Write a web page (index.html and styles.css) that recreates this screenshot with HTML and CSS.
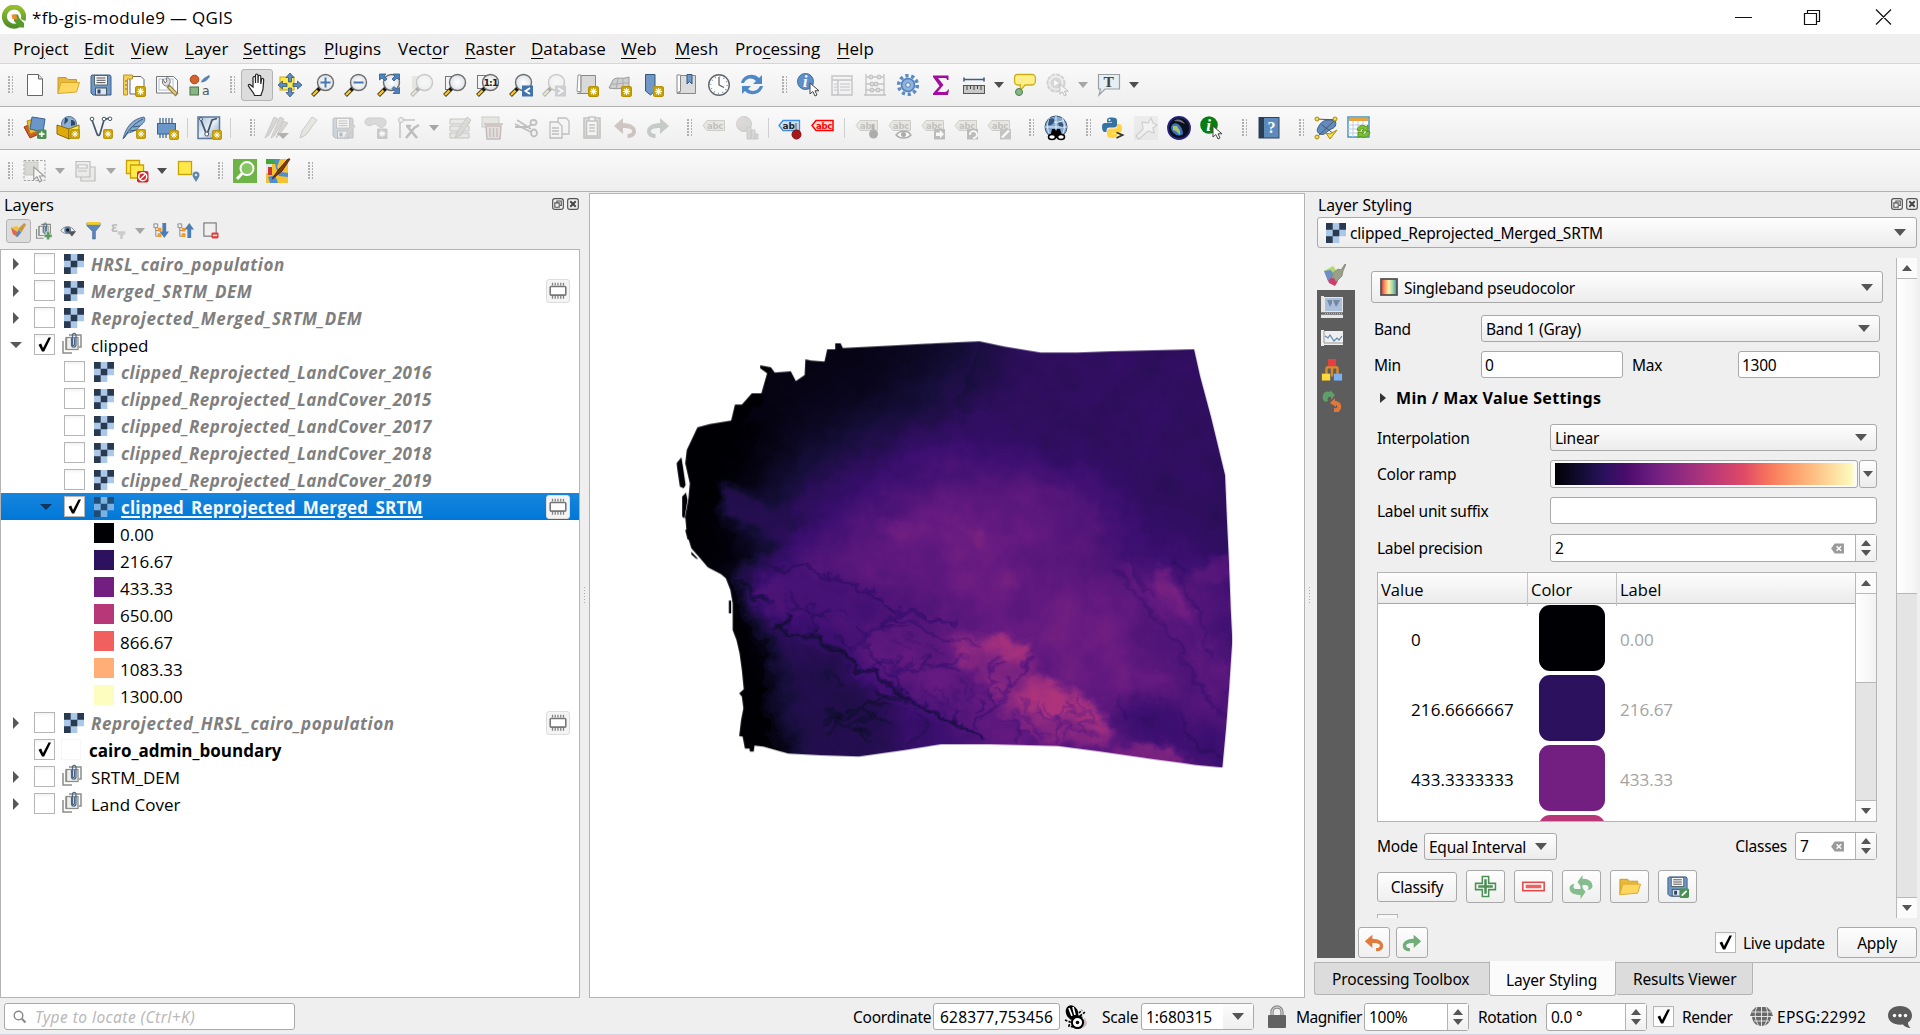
FILE: index.html
```html
<!DOCTYPE html>
<html lang="en">
<head>
<meta charset="utf-8">
<title>*fb-gis-module9 — QGIS</title>
<link rel="stylesheet" href="styles.css">
</head>
<body>
<svg class="defs" width="0" height="0">
  <defs>
    <linearGradient id="bluebox" x1="0" y1="0" x2="1" y2="1"><stop offset="0" stop-color="#a9c0da"/><stop offset=".5" stop-color="#e8eef5"/><stop offset="1" stop-color="#7c9cc4"/></linearGradient>
    <linearGradient id="spectral"><stop offset="0" stop-color="#d7303a"/><stop offset=".25" stop-color="#f8a064"/><stop offset=".5" stop-color="#fbf5b0"/><stop offset=".75" stop-color="#9bd3a4"/><stop offset="1" stop-color="#3480b8"/></linearGradient>
    <linearGradient id="qg" x1="0" y1="0" x2="0" y2="1"><stop offset="0" stop-color="#93bf2e"/><stop offset="1" stop-color="#4f8f28"/></linearGradient>
    <radialGradient id="glass"><stop offset="0" stop-color="#fff"/><stop offset="1" stop-color="#dfe3e6"/></radialGradient>
  </defs>
  <symbol id="star" viewBox="0 0 11 11"><rect x=".5" y=".5" width="10" height="10" rx="1.5" fill="#cda300" stroke="#b89100"/><path d="M5.5 2v7M2 5.500h7M3 3l5 5M8 3l-5 5" stroke="#fff" stroke-width="1.1"/><circle cx="5.500" cy="5.500" r="1.400" fill="#fff"/></symbol>
  <symbol id="lens" viewBox="0 0 24 24"><path d="M9 15 1.500 22.500" stroke="#3c3620" stroke-width="4"/><path d="M6.500 17.500 2 22" stroke="#f6c62c" stroke-width="2.400"/><circle cx="8" cy="16" r="1.700" fill="#111"/><circle cx="14.500" cy="9.500" r="8" fill="url(#glass)" stroke="#6d6d6d" stroke-width="1.400"/></symbol>
  <symbol id="folder" viewBox="0 0 24 24"><path d="M2 20V4.500h8l2 2h8.500V10" fill="#e9b93f" stroke="#c99b25"/><path d="M1.800 20.500 5 9.500h18.500L20.500 19z" fill="#ffd75e" stroke="#d9a72c"/></symbol>
  <symbol id="floppy" viewBox="0 0 24 24"><path d="M3 2h18l1 1.500V22H4l-2-2V3z" fill="#6f98c6" stroke="#3f5f86"/><rect x="5.500" y="2.500" width="13" height="9.500" fill="#f6f6f6" stroke="#566"/><path d="M7.500 5h9M7.500 7.300h9M7.500 9.600h9" stroke="#555"/><rect x="6.500" y="15" width="11" height="7" fill="#dde6ee" stroke="#456"/><rect x="8.500" y="16.500" width="3" height="4" fill="#2f4766"/></symbol>
  <symbol id="tag" viewBox="0 0 24 24"><path d="M1 9.500 5 4.500h17.500v10H5z" fill="#ddd8c4" stroke="#aaa692"/></symbol>
  <symbol id="raster" viewBox="0 0 20 20"><path fill="#acc8e8" d="M0 0h20v13.300h-6.700V20H0z"/><path fill="#29394f" d="M0 0h6.700v6.700H0zM13.300 0H20v6.700h-6.700zM6.700 6.700h6.600v6.600H6.700zM0 13.300h6.700V20H0z"/></symbol>
  <symbol id="group" viewBox="0 0 20 22"><path d="M1 9v12h9M4 18V6h8" fill="none" stroke="#8b8f87" stroke-width="1.500"/><rect x="4.500" y="5.500" width="11.500" height="12" fill="#eee" stroke="#8b8f87" stroke-width="1.300"/><path d="M7 3h12v12h-2.500" fill="none" stroke="#8b8f87" stroke-width="1.500"/><path d="M9.500 6v6.500c0 3.500 4.500 3.500 4.500 0V3.500c0-3-3.500-3-3.500 0v9c0 1.300 2 1.300 2 0V6" fill="none" stroke="#4a6684" stroke-width="1.200"/></symbol>
  <symbol id="chipmem" viewBox="0 0 24 24"><rect x="3.500" y="7" width="17" height="9.500" rx="1" fill="#fff" stroke="#767676" stroke-width="1.700"/><path d="M6 6V3M9 6V3M12 6V3M15 6V3M18 6V3M6 17.500v3M9 17.500v3M12 17.500v3M15 17.500v3M18 17.500v3" stroke="#808080" stroke-width="1.400"/></symbol>
  <symbol id="check" viewBox="0 0 21 21"><path d="M4.500 10.700 7.200 9.600 9 14 14.500 3.500h2.500L10.200 17.500H8z" fill="#000"/></symbol>
  <symbol id="undo" viewBox="0 0 24 24"><path d="M1 10 10 2v5c8 0 13 3.500 13 8.500 0 4-3.500 6.500-8.500 6.500v-4c3 0 4.500-1 4.500-2.800 0-2.200-3-3.200-9-3.200V18z" fill="currentColor"/></symbol>
  <symbol id="float" viewBox="0 0 11 11"><rect x=".6" y=".6" width="9.800" height="9.800" rx="2" fill="none" stroke="#555" stroke-width="1.100"/><path d="M4.500 4V2.800h4v4H7.300M2.600 4.500h4v4h-4z" fill="none" stroke="#555"/></symbol>
  <symbol id="close" viewBox="0 0 11 11"><rect x=".6" y=".6" width="9.800" height="9.800" rx="2" fill="none" stroke="#555" stroke-width="1.100"/><path d="M3 3l5 5M8 3 3 8" stroke="#444" stroke-width="1.800"/></symbol>
  <symbol id="clear" viewBox="0 0 14 12"><path d="M0 6 4 .5h10v11H4z" fill="#9a9a9a"/><path d="m6 3.500 5 5M11 3.500l-5 5" stroke="#fff" stroke-width="1.600"/></symbol>
  <symbol id="cursor" viewBox="0 0 12 15"><path d="M1 1v11l2.800-2.500L6 14l2-1-2-4.200h4z" fill="#fff" stroke="#444" stroke-width="1"/></symbol>
</svg>

<div class="app">
<header class="titlebar">
  <svg class="logo" viewBox="0 0 24 24"><path d="M17.500 19.500A9.600 9.600 0 1 1 21 15" fill="none" stroke="url(#qg)" stroke-width="5"/><path d="M12 9.500h4l1.500 4L22 18v4.500h-4L12 16z" fill="#5a9a2c"/><path d="M9.500 9.500h4.500l1.500 5-5-.5z" fill="#f08a2c"/></svg>
  <span class="caption">*fb-gis-module9 — QGIS</span>
  <svg class="winbtns" viewBox="0 0 160 34" fill="none" stroke="#111" stroke-width="1.200"><path d="M4 17.500h17M73.500 13.500h12v11h-12zM76.500 13.500v-3h12v11h-3M145 9.500l15 15M160 9.500l-15 15"/></svg>
</header>
<nav class="menubar"><span>Pro<u>j</u>ect</span><span><u>E</u>dit</span><span><u>V</u>iew</span><span><u>L</u>ayer</span><span><u>S</u>ettings</span><span><u>P</u>lugins</span><span>Vect<u>o</u>r</span><span><u>R</u>aster</span><span><u>D</u>atabase</span><span><u>W</u>eb</span><span><u>M</u>esh</span><span>Pro<u>c</u>essing</span><span><u>H</u>elp</span></nav>

<div class="toolbar">
  <i class="grip first"></i>
  <b><svg viewBox="0 0 24 24"><path d="M4.500 1.500h11l4 4.500v16.500h-15z" fill="#fff" stroke="#666"/><path d="M15.500 1.500V6h4" fill="#ddd" stroke="#666"/></svg></b>
  <b><svg><use href="#folder"/></svg></b>
  <b><svg><use href="#floppy"/></svg></b>
  <b><svg viewBox="0 0 24 24"><path d="M8 3.500h11l3 3V21H8z" fill="#fff" stroke="#666"/><path d="M1.500 2h9v4h-5v16h-4z" fill="#f2cf55" stroke="#b8952b"/><path d="M3 8h2M3 12h2M3 16h2" stroke="#866"/><use href="#star" x="13" y="13" width="11" height="11"/></svg></b>
  <b><svg viewBox="0 0 24 24"><path d="M1.500 3.500h17l4 4V20h-21z" fill="#fff" stroke="#777"/><rect x="4" y="6" width="14" height="11" fill="none" stroke="#a8c0e0"/><path d="M13 13l9 9" stroke="#8a7a45" stroke-width="4"/><path d="M14 14l7 7" stroke="#e8d27a" stroke-width="2"/><path d="M8 6c-2 4 1 8 5 7l2-3c1-4-2-6-4-5l1 3-2 2z" fill="#ddd" stroke="#777"/></svg></b>
  <b><svg viewBox="0 0 24 24"><circle cx="6.500" cy="6.500" r="4.300" fill="#d4622c" stroke="#a64416"/><path d="M13 9.500c0-3 5-6 8-7.500l1 1.500c-2 3-5 6-9 6z" fill="#5a82b4"/><rect x="2" y="14" width="8.500" height="8" fill="#86b586" stroke="#487048"/><text x="14" y="22" class="ic thin" font-size="12.500" fill="#555">a</text></svg></b>
  <i class="grip"></i>
  <b class="on"><svg viewBox="0 0 24 24"><path d="M8 14V5c0-2 2.300-2 2.500 0v5-7.500c0-2 2.500-2 2.500 0V10l.3-6.500c.2-1.800 2.500-1.600 2.500.2V11l.7-4.500c.3-1.600 2.300-1.300 2.200.5L18 16c-.3 3-2 4-2 6.500H9.500C9 19 5.500 17 3.500 13c-.6-1.500 1-2.200 2-1z" fill="#fff" stroke="#222" stroke-width="1.200"/></svg></b>
  <b><svg viewBox="0 0 24 24"><rect x="2" y="4" width="14" height="13" fill="#ffe84a" stroke="#c9a900"/><path d="M12 0l4 4.500h-2.500V9h-3V4.500H8zM24 12l-4.500 4v-2.500H15v-3h4.500V8zM12 24l-4-4.500h2.500V15h3v4.500H16zM0 12l4.500-4v2.500H9v3H4.500V16z" fill="#5d8cc0" stroke="#35587f" stroke-width=".8"/></svg></b>
  <b><svg viewBox="0 0 24 24"><use href="#lens"/><path d="M14.500 4.500v10M9.500 9.500h10" stroke="#4478b4" stroke-width="2"/></svg></b>
  <b><svg viewBox="0 0 24 24"><use href="#lens"/><path d="M9.500 9.500h10" stroke="#4478b4" stroke-width="2"/></svg></b>
  <b><svg viewBox="0 0 24 24"><use href="#lens"/><path d="M2.500 1H9L7 3l3 3-2 2-3-3-2.500 2zM22.500 1H16l2 2-3 3 2 2 3-3 2.500 2zM22.500 20.500H16l2-2-3-3 2-2 3 3 2.500-2z" fill="#4f83bd" stroke="#2f5a8c" stroke-width=".8"/></svg></b>
  <b class="dis"><svg viewBox="0 0 24 24"><rect x="2" y="3" width="13" height="13" fill="#c9c8a8"/><use href="#lens"/></svg></b>
  <b><svg viewBox="0 0 24 24"><rect x="2.500" y="3.500" width="13" height="13" fill="#f4f4f4" stroke="#777"/><use href="#lens"/></svg></b>
  <b><svg viewBox="0 0 24 24"><rect x="1.500" y="2.500" width="10" height="13" fill="#f4f4f4" stroke="#777"/><use href="#lens"/><text x="7.500" y="13" class="ic" font-size="9.500" fill="#222" letter-spacing="-1">1:1</text></svg></b>
  <b><svg viewBox="0 0 24 24"><use href="#lens"/><rect x="13" y="12.500" width="11" height="11" fill="#3f72ad"/><path d="M21 15l-4.500 3 4.500 3" stroke="#fff" stroke-width="2" fill="none"/></svg></b>
  <b class="dis"><svg viewBox="0 0 24 24"><use href="#lens"/><rect x="13" y="12.500" width="11" height="11" fill="#789"/><path d="M16 15l4.500 3-4.500 3" stroke="#fff" stroke-width="2" fill="none"/></svg></b>
  <b><svg viewBox="0 0 24 24"><path d="M3 2h3v16.500H2z" fill="#fff" stroke="#999"/><path d="M6 2.500h14.500v18H2c3 0 4-1 4-3z" fill="#d9d9d9" stroke="#888"/><use href="#star" x="13" y="13" width="11" height="11"/></svg></b>
  <b><svg viewBox="0 0 24 24"><path d="M1 15 5 7c4-4 8 0 16-3v11c-5-1-9 2-20 0z" fill="#cfcfcf" stroke="#999"/><path d="M3 11c6 1 12-2 18-1M10 5 8 16M15 5v10" stroke="#aaa" fill="none"/><use href="#star" x="13" y="13" width="11" height="11"/></svg></b>
  <b><svg viewBox="0 0 24 24"><path d="M4.500 1.500H14V18l-4.500 4-5-4z" fill="#6f98c6" stroke="#34587f"/><use href="#star" x="12" y="13" width="11" height="11"/></svg></b>
  <b><svg viewBox="0 0 24 24"><path d="M3 2h3.500v16L3 20z" fill="#fff" stroke="#888"/><path d="M6.500 2.500h15v18H3c2 0 3.500-1 3.500-3z" fill="#dcdcdc" stroke="#888"/><path d="M13 1.500h5V11l-2.500-2.500L13 11z" fill="#6f98c6" stroke="#34587f"/></svg></b>
  <b><svg viewBox="0 0 24 24"><circle cx="12" cy="12" r="10.300" fill="#fdfdfd" stroke="#666" stroke-width="1.400"/><path d="M12 4v8l5 2.500" fill="none" stroke="#555" stroke-width="1.200"/><circle cx="12" cy="12" r="8.200" fill="none" stroke="#6f98c6" stroke-width="1.400" stroke-dasharray="1 3.300"/></svg></b>
  <b><svg viewBox="0 0 24 24" fill="#4f88c6"><path d="M1 10C3 1 14-.5 19 5l3-3v9h-9l3-3C12 4 6 5 4 10zM23 13c-2 9-13 10.500-18 5l-3 3v-8h9l-3 3c4 3.500 10 2 12-3z"/></svg></b>
  <i class="grip"></i>
  <b><svg viewBox="0 0 24 24"><circle cx="8.500" cy="8.500" r="8" fill="#5f8fc8" stroke="#3f6ca4"/><text x="6" y="14" font-family="Liberation Serif" font-style="italic" font-weight="bold" font-size="16" fill="#fff">i</text><use href="#cursor" x="12" y="9" width="12" height="15"/></svg></b>
  <b class="dis"><svg viewBox="0 0 24 24"><path d="M2 3h20v19H2zM2 7h20M8 7v15" fill="#eef2f6" stroke="#667" stroke-width="1.400"/><path d="M4 11h3M4 14h3M4 17h3M10 11h10M10 14h10M10 17h10" stroke="#567"/></svg></b>
  <b class="dis"><svg viewBox="0 0 24 24" fill="none" stroke="#666" stroke-width="1.400"><path d="M3 1v21M21 1v21M1 22h22M3 4h18M3 11h18M3 17h18"/><g fill="#cbb"><circle cx="8" cy="4" r="1.800"/><circle cx="16" cy="4" r="1.800"/><circle cx="9" cy="11" r="1.800"/><circle cx="13" cy="11" r="1.800"/><circle cx="9" cy="17" r="1.800"/><circle cx="15" cy="17" r="1.800"/></g></svg></b>
  <b><svg viewBox="0 0 24 24"><circle cx="12" cy="12" r="9.300" fill="none" stroke="#5b8bc6" stroke-width="3.600" stroke-dasharray="3.200 2.640"/><circle cx="12" cy="12" r="6.500" fill="#8fb3de" stroke="#4f80bd" stroke-width="1.600"/><circle cx="12" cy="12" r="2.300" fill="#eee" stroke="#4f80bd"/></svg></b>
  <b><svg viewBox="0 0 24 24"><path d="M4 2.500h15.500V7H18c0-1.500-1-2-2.500-2H9l5.500 7L8.500 19h7c2 0 3-1 3.500-2.500h1l-1 5.500H4v-1.500L10.500 13 4 4z" fill="#a40aa4"/></svg></b>
  <b><svg viewBox="0 0 24 24"><path d="M2 6.500h20M2 4.500v4M22 4.500v4" stroke="#3c5f85" stroke-width="1.600"/><rect x="1.500" y="12.500" width="21" height="8" fill="#c9c9c9" stroke="#555"/><path d="M5 13v4M8.500 13v3M12 13v4M15.500 13v3M19 13v4" stroke="#444"/></svg></b>
  <i class="dd"></i>
  <b><svg viewBox="0 0 24 24"><path d="M4 1.500h15c3 0 3.500 1.500 3.500 5S21 12 19 12h-7l-5 6 .500-6H4.500C2 12 1.500 10 1.500 6.500S2 1.500 4 1.500z" fill="#fdee8c" stroke="#cfae12" stroke-width="1.300"/><circle cx="6" cy="19" r="3.500" fill="#86b586" stroke="#4c8050"/></svg></b>
  <b class="dis"><svg viewBox="0 0 24 24"><circle cx="10" cy="10" r="8.500" fill="#ddd" stroke="#888" stroke-width="2" stroke-dasharray="4 1"/><circle cx="10" cy="10" r="5.500" fill="#99a" /><path d="M8 7l5 3-5 3z" fill="#fff"/><use href="#cursor" x="13" y="10" width="11" height="14"/></svg></b>
  <i class="dd off"></i>
  <b><svg viewBox="0 0 24 24"><path d="M1.500 1.500h21V16H8l-6 6 1.500-6h-2z" fill="#e6eff3" stroke="#98a0a4" stroke-width="1.200"/><text x="6.500" y="13.500" font-family="Liberation Serif" font-size="15.500" font-weight="bold" fill="#444">T</text></svg></b>
  <i class="dd"></i>
</div>

<div class="toolbar">
  <i class="grip first"></i>
  <b><svg viewBox="0 0 24 24"><path d="M1 11l9-4 6 11-9 4z" fill="#cf5a28" stroke="#993c14"/><path d="M4 5l10-3 3 12-10 4z" fill="#eabf2f" stroke="#b08a10"/><path d="M9 1l13 2-2 13-13-3z" fill="#6a96c9" stroke="#3a6391"/><rect x="14" y="13.500" width="9.500" height="9.500" rx="1.500" fill="#4a9152"/><path d="M18.700 15.500v5.500M16 18.200h5.500" stroke="#fff" stroke-width="1.700"/></svg></b>
  <b><svg viewBox="0 0 24 24"><circle cx="13" cy="8" r="7.500" fill="#8fb0d4" stroke="#56779b"/><path d="M9 2c3 0 4 2 2 4s-3 2-3 4M15 4c3 0 5 2 4 5l-4 1z" fill="#2c4a6c"/><path d="M1 9l12 4v10L1 18z" fill="#dfa908" stroke="#8a6a05"/><path d="M13 13l10-4v9l-10 5z" fill="#f6e94a" stroke="#8a6a05"/><use href="#star" x="14" y="13" width="10" height="10"/></svg></b>
  <b><svg viewBox="0 0 24 24"><path d="M3 4l5 14c1 2 2 2 3 0l4-14 5-2" fill="none" stroke="#44586c" stroke-width="1.700"/><g fill="#fff" stroke="#44586c"><circle cx="3" cy="3" r="1.800"/><circle cx="15" cy="3" r="1.800"/><circle cx="21" cy="2.800" r="1.800"/></g><use href="#star" x="14" y="13" width="10" height="10"/></svg></b>
  <b><svg viewBox="0 0 24 24"><path d="M1 23C4 11 10 3 22 1c2 3 0 6-3 8-4 5-8 7-13 8z" fill="#86aacd" stroke="#4d7196"/><path d="M2 22C7 13 13 7 21 3M8 15l7-1M11 11l7-1" stroke="#37597e" fill="none"/><use href="#star" x="14" y="13" width="10" height="10"/></svg></b>
  <b><svg viewBox="0 0 24 24"><rect x="2.500" y="7.500" width="18" height="10.500" fill="#6a96c9" stroke="#3a6391"/><path d="M5 7V2M8 7V2M11 7V2M14 7V2M17 7V2M5 18v4M8 18v4M11 18v4" stroke="#345a86" stroke-width="1.200"/><use href="#star" x="14" y="14" width="10" height="10"/></svg></b>
  <i class="sep"></i>
  <b><svg viewBox="0 0 24 24"><rect x="1" y="1" width="21.500" height="21.500" fill="url(#bluebox)" stroke="#5a7898" stroke-width="1.500"/><path d="M4 4l5 13h1.500L15 4l5-1.500" fill="none" stroke="#44586c" stroke-width="1.800"/><circle cx="4" cy="3" r="1.500" fill="#fff" stroke="#44586c"/><circle cx="9.800" cy="18" r="2" fill="#fff" stroke="#44586c"/><use href="#star" x="15" y="14" width="10" height="10"/></svg></b>
  <i class="sep wide"></i>
  <i class="grip"></i>
  <b class="dis"><svg viewBox="0 0 24 24"><path d="M0 22 9 1l4 2L4 19zM6 22l9-21 4 2-9 16zM11 22l7-17 5 2-9 12z" fill="#a89684" stroke="#777"/><path d="M12 17h12l-6 6z" fill="#333"/></svg></b>
  <b class="dis"><svg viewBox="0 0 24 24"><path d="M2 22 4 15 14 1l5 3L8 19z" fill="#ccc8ae" stroke="#777"/></svg></b>
  <b class="dis"><svg viewBox="0 0 24 24"><use href="#floppy" /><path d="M13 23 20 8l4 2-8 12z" fill="#a88" stroke="#777"/></svg></b>
  <b class="dis"><svg viewBox="0 0 24 24"><path d="M1 6c0-5 6-4 10-4s11-1 11 4-5 7-8 4-4-2-6-1-7 1-7-3z" fill="#9aa39a" stroke="#777"/><rect x="13" y="12.500" width="10.500" height="10.500" rx="1" fill="#777"/><path d="M18 14.500v6.500M15 17.700h6.500M16 15.700l4.500 4M20.500 15.700l-4.500 4" stroke="#fff" stroke-width="1.200"/></svg></b>
  <b class="dis"><svg viewBox="0 0 24 24"><path d="M3 22V3h4M7 4h11" fill="none" stroke="#666" stroke-width="1.500"/><circle cx="4" cy="4" r="2.500" fill="#ddd" stroke="#555"/><path d="M9 22 18 11M10 10l10 12M9 10h5M17 12l5-3" stroke="#555" stroke-width="2.600"/></svg></b>
  <i class="dd off"></i>
  <b class="dis"><svg viewBox="0 0 24 24"><path d="M2 3h19v5H2zM2 10h19v5H2zM2 17h19v5H2z" fill="#d0d0b4" stroke="#666"/><path d="M7 22l2-6L19 1l4 3-10 15z" fill="#aca090" stroke="#777"/></svg></b>
  <b class="dis"><svg viewBox="0 0 24 24"><rect x="1" y="1" width="17" height="10" fill="#c8c8a0" stroke="#777"/><path d="M3 8h19M5 10h15l-1 13H6z" fill="#cba" stroke="#944" stroke-width="1.500"/><path d="M9 12v9M12.500 12v9M16 12v9" stroke="#944" stroke-width="1.400"/></svg></b>
  <b class="dis"><svg viewBox="0 0 24 24" fill="none" stroke="#555" stroke-width="1.800"><path d="M1 8l16 8M3 4l14 9M1 11h13l4-3"/><ellipse cx="19.500" cy="6.500" rx="3" ry="2.500"/><ellipse cx="20" cy="17" rx="3" ry="3.500"/></svg></b>
  <b class="dis"><svg viewBox="0 0 24 24" fill="#f6f6f6" stroke="#555" stroke-width="1.300"><path d="M11 2h8l3 3v13H11z"/><path d="M3 6h8l4 4v12H3z"/><path d="M5 12h7M5 15h7M5 18h7"/></svg></b>
  <b class="dis"><svg viewBox="0 0 24 24" fill="#f6f6f6" stroke="#665" stroke-width="1.600"><rect x="4" y="2" width="16" height="20" fill="#bbb9a0"/><path d="M6.500 5h11v15h-11zM9 1h6v4H9zM9 9h6M9 12h6M9 15h6"/></svg></b>
  <b class="dis brown"><svg><use href="#undo"/></svg></b>
  <b class="dis moss"><svg class="flip"><use href="#undo"/></svg></b>
  <i class="grip slim"></i>
  <b class="dis more"><svg viewBox="0 0 24 24"><use href="#tag"/><text x="5" y="12.500" class="ic abc">abc</text></svg></b>
  <b class="dis"><svg viewBox="0 0 24 24"><circle cx="9" cy="8" r="7.500" fill="#8ca38c" stroke="#777"/><path d="M9 8V.5A7.500 7.500 0 0 0 2.500 12z" fill="#c09a94"/><path d="M12 11h4v12h-4zM16 14h4v9h-4zM20 18h3v5h-3z" fill="#a8a090" stroke="#777"/></svg></b>
  <i class="sep mid"></i>
  <b><svg viewBox="0 0 24 24"><path d="M1 9.500 5 4.500h16.500v10H5z" fill="#cfe4f8" stroke="#3d8ee6" stroke-width="1.300"/><text x="4.500" y="12.800" class="ic" font-size="9" fill="#222">ab</text><path d="M18 7v8" stroke="#999" stroke-width="2.500"/><circle cx="18.500" cy="18.500" r="4.500" fill="#a81a1a" stroke="#7c1010"/></svg></b>
  <b><svg viewBox="0 0 24 24"><path d="M1 9.500 5 4.500h17v10H5z" fill="#ffdcdc" stroke="#f00" stroke-width="1.500"/><text x="5" y="12.500" class="ic abc red">abc</text></svg></b>
  <i class="sep wide"></i>
  <b class="dis more"><svg viewBox="0 0 24 24"><use href="#tag"/><text x="5" y="12.500" class="ic abc">ab</text><circle cx="18.500" cy="18" r="4.500" fill="#766"/><path d="M18 8v7" stroke="#777" stroke-width="3"/></svg></b>
  <b class="dis more"><svg viewBox="0 0 24 24"><use href="#tag"/><text x="5" y="12.500" class="ic abc">abc</text><path d="M8 19c4-5 12-5 15 0-4 4-11 4-15 0z" fill="#fff" stroke="#666" stroke-width="1.400"/><circle cx="15.500" cy="18.500" r="2.500" fill="#667"/></svg></b>
  <b class="dis more"><svg viewBox="0 0 24 24"><use href="#tag"/><text x="5" y="12.500" class="ic abc">abc</text><rect x="13" y="13" width="11" height="10.500" fill="#888"/><path d="M15 16.500h4V14l4 4.200-4 4V20h-4z" fill="#fff"/></svg></b>
  <b class="dis more"><svg viewBox="0 0 24 24"><use href="#tag"/><text x="5" y="12.500" class="ic abc">abc</text><rect x="13" y="13" width="11" height="10.500" fill="#888"/><path d="M19 22a3.500 3.500 0 1 0-3-3" stroke="#fff" stroke-width="1.800" fill="none"/></svg></b>
  <b class="dis more"><svg viewBox="0 0 24 24"><use href="#tag"/><text x="5" y="12.500" class="ic abc">abc</text><rect x="13" y="13" width="11" height="10.500" fill="#998"/><path d="M15 21.500l7-7" stroke="#fff" stroke-width="2.400"/></svg></b>
  <i class="grip"></i>
  <b><svg viewBox="0 0 24 24"><circle cx="12" cy="11" r="11" fill="#84a7cd" stroke="#3b5c82"/><path d="M1 11h22M12 0v20M4 4c5 3 11 3 16 0M6 2c-3 5-3 11-1 15M18 2c3 5 3 11 1 15" stroke="#e4eef8" fill="none"/><path d="M5 3c4-2 6 0 5 3s-5 4-6 3zM14 7c3-2 6 0 5 4l-4-1z" fill="#34557b"/><path d="M6 22 8 13h3l1 2 1-2h3l3 9z" fill="#000"/><ellipse cx="8" cy="21" rx="3.500" ry="2.500" stroke="#000" stroke-width="1.500" fill="#fff"/><ellipse cx="17" cy="21" rx="3.500" ry="2.500" stroke="#000" stroke-width="1.500" fill="#fff"/></svg></b>
  <i class="grip"></i>
  <b><svg viewBox="0 0 24 24"><path d="M6 6.500V4c0-2 2-2.500 5-2.500s5 .6 5 3v4c0 2-1 3-3 3H8.500c-2 0-3 1-3 3V16H4c-2 0-3-2-3-5s1-4 3-4h7v-.7z" fill="#3673a5"/><path d="M16 8h2c2 0 3 2 3 4.500S20 17 18 17h-7v1h5v1.500c0 2-2 2.500-5 2.500s-5-1-5-3v-3.500c0-2 1-3 3-3h4.500c2 0 2.500-1 2.500-3z" fill="#ffd343"/><circle cx="8.500" cy="4" r="1" fill="#fff"/><path d="M15.500 16.500l6 2.500-6 3" stroke="#333" fill="none" stroke-width="1.800"/></svg></b>
  <b class="dis"><svg viewBox="0 0 24 24"><rect width="24" height="24" fill="#d8d8d8"/><path d="M2 20 9 13l-1-7 6 1 3-5 2 5 4 2-4 3 1 5-6-2-9 8z" fill="#eee" stroke="#888" stroke-width="1.300"/></svg></b>
  <b><svg viewBox="0 0 24 24"><circle cx="12" cy="12" r="11" fill="#0b0f1c" stroke="#23237c" stroke-width="1.800"/><path d="M4 11c1-3 4-5 7-3s5 6 5 10c-3 2-5 2-8 0s-4-4-4-7z" fill="#3a74bb"/><path d="M6 10l4 0 3 5 0 4-4-4-3-1z" fill="#a9c36b"/><path d="M7 5c4-3 9-1 11 3-4-2-7-3-11-3z" fill="#6f7478"/></svg></b>
  <b><svg viewBox="0 0 24 24"><circle cx="9" cy="9" r="8.800" fill="#0a7d12"/><text x="6.300" y="15" font-family="Liberation Serif" font-style="italic" font-weight="bold" font-size="17" fill="#fff">i</text><use href="#cursor" x="12" y="9" width="12" height="15"/></svg></b>
  <i class="grip"></i>
  <b><svg viewBox="0 0 24 24"><rect x="2" y="1.500" width="20" height="20.500" fill="#5d8abb" stroke="#2c4460"/><path d="M2 1.500h5V22H2z" fill="#2b3e54"/><text x="10.500" y="17" font-family="Liberation Serif" font-size="16" fill="#fff">?</text></svg></b>
  <i class="grip"></i>
  <b><svg viewBox="0 0 24 24"><path d="M5 10c3-6 9-7 16-6 2 5 0 8-4 9-5 3-7 7-11 5s-3-5-1-8z" fill="#5f8cc2" stroke="#3c5674"/><path d="M3 3l18 1L3 21M8 9l12 9" stroke="#555" fill="none"/><g fill="#f7e04a" stroke="#a08a10"><circle cx="3" cy="3" r="2"/><circle cx="21" cy="3" r="2"/><circle cx="3" cy="21" r="2"/><path d="M12 17l4 6 7-9-7 4z"/></g></svg></b>
  <b><svg viewBox="0 0 24 24"><rect x="1" y="1" width="21" height="20" fill="#fff" stroke="#3b8fc0" stroke-width="1.400"/><path d="M2 2h19v3H2z" fill="#e9a33c"/><path d="M1 9h20M1 13h20M1 17h20M6 5v16M11 5v16M16 5v16" stroke="#bcd"/><path d="M10 14c1-5 7-6 9-3l2-2v6h-6l2-2c-2-1-3 0-4 2zM23 16c-1 5-7 7-10 4l-2 2v-6h6l-2 2c2 1 4 0 5-3z" fill="#7cc22a" stroke="#4b8a12" stroke-width=".8"/></svg></b>
</div>

<div class="toolbar last">
  <i class="grip first"></i>
  <b class="dis more"><svg viewBox="0 0 24 24"><rect x="1" y="1.500" width="21" height="20" fill="none" stroke="#555" stroke-dasharray="2.500 1.500"/><rect x="2" y="3" width="13" height="13" fill="#bdbda6" stroke="#999"/><use href="#cursor" x="9" y="7" width="15" height="17"/></svg></b>
  <i class="dd off"></i>
  <b class="dis more"><svg viewBox="0 0 24 24" fill="#e4e4d8" stroke="#888" stroke-width="1.200"><path d="M7 8h14v14H7z"/><path d="M2 2.500h14V18H2z"/><path d="M4 6h9v3H4zM4 12h9" fill="#fff"/></svg></b>
  <i class="dd off"></i>
  <b><svg viewBox="0 0 24 24"><path d="M1.500 1.500h13v13h-13z" fill="#ffe84a" stroke="#c9a200" stroke-width="1.300"/><path d="M5.500 6h13v13h-13z" fill="#ffe84a" stroke="#c9a200" stroke-width="1.300"/><rect x="12" y="12" width="11.500" height="11.500" rx="2" fill="#d6262b"/><circle cx="17.700" cy="17.700" r="4" fill="none" stroke="#fff" stroke-width="1.500"/><path d="M15 20.500l5.500-5.500" stroke="#fff" stroke-width="1.500"/></svg></b>
  <i class="dd"></i>
  <b><svg viewBox="0 0 24 24"><rect x="2.500" y="2.500" width="13" height="13" fill="#ffe84a" stroke="#c9a200" stroke-width="1.300"/><path d="M20 23c-2-3.500-3.500-5-3.500-7a3.500 3.500 0 0 1 7 0c0 2-1.500 3.500-3.500 7z" fill="#5e87a8"/><circle cx="20" cy="16" r="1.300" fill="#dde"/></svg></b>
  <i class="grip"></i>
  <b><svg viewBox="0 0 24 24"><rect width="24" height="24" fill="#6cb446"/><circle cx="14" cy="9.500" r="6.500" fill="#86c763" stroke="#fff" stroke-width="2"/><path d="M9.500 14 4 20" stroke="#fff" stroke-width="3"/></svg></b>
  <b><svg viewBox="0 0 24 24"><rect width="22" height="24" fill="#f6c32f"/><path d="M0 0h9v5H0z" fill="#3ea83a"/><path d="M0 5h6v9H0z" fill="#e6e6e6"/><path d="M2 8h4v8H2z" fill="#c33"/><path d="M8 0h6l-3 8 4 5 7 1v4l-9-1-3-8zM2 18l7-2 3 8H4z" fill="#4b8fd9"/><path d="M6 20 13 10 22 0h2l-8 12-6 5z" fill="#7c3a14" stroke="#55260c"/></svg></b>
  <i class="grip"></i>
</div>

<main class="work">
  <section class="layers">
    <div class="dock-title"><span>Layers</span><svg class="db"><use href="#float"/></svg><svg class="db"><use href="#close"/></svg></div>
    <div class="layer-tools">
      <b class="on"><svg viewBox="0 0 18 18"><path d="M1 6l6-2 5 5-4 6z" fill="#f0c243"/><path d="M1 6l2 7 5 3 2-4z" fill="#dc6a50"/><path d="M6 15l2 1 4-5-3-3z" fill="#5b87bb"/><path d="M9 7l6-6 2 2-5 8z" fill="#c9963c"/></svg></b>
      <b><svg viewBox="0 0 20 22"><use href="#group"/><path d="M14 12h4v4h3v4h-3v3h-4v-3h-3v-4h3z" fill="#5b9a5f" stroke="#eee" stroke-width=".7"/></svg></b>
      <b><svg viewBox="0 0 20 18"><path d="M1 9c4-6 12-6 16 0-4 5-12 5-16 0z" fill="#eef" stroke="#777"/><circle cx="9" cy="8.500" r="4" fill="#557a9e"/><circle cx="9" cy="8.500" r="1.800" fill="#112"/><path d="M9 10h10l-5 6z" fill="#555"/></svg></b>
      <b><svg viewBox="0 0 18 18"><path d="M2 1h14v3l-5 6v8H8v-8L2 4z" fill="#5b87bb" stroke="#3c618c" stroke-width=".6"/><path d="M2 0h14v3H2z" fill="#f1cc24"/></svg></b>
      <b class="dis"><svg viewBox="0 0 20 20"><text x="1" y="12" class="ic" font-size="16" fill="#555">ε</text><path d="M9 11h9v3l-3 2v4h-3v-4l-3-2z" fill="#888"/></svg></b>
      <i class="dd off"></i>
      <b><svg viewBox="0 0 18 18"><path d="M2 2h4v4H2zM4 6v9h4M4 9h4" fill="none" stroke="#888"/><path d="M6 6h4v4H6zM6 12h4v4H6z" fill="#f59a22"/><path d="M11 1h4v9h3l-5 7-5-7h3z" fill="#4d7db5"/></svg></b>
      <b><svg viewBox="0 0 18 18"><path d="M1 2h4v4H1zM3 6v9h4M3 9h4" fill="none" stroke="#888"/><path d="M5 6h4v4H5zM5 12h4v4H5z" fill="#f59a22"/><path d="M11 17h4V8h3l-5-7-5 7h3z" fill="#4d7db5"/></svg></b>
      <b><svg viewBox="0 0 18 18"><rect x="2" y="1" width="13" height="14" fill="none" stroke="#777" stroke-width="1.200"/><rect x="10" y="11" width="7.500" height="6.500" rx="1.500" fill="#e23c3c"/><path d="M11.500 14.200h4.500" stroke="#fff" stroke-width="1.500"/></svg></b>
    </div>
    <div class="tree">
      <div class="row"><i class="tw r"></i><i class="cb"></i><svg class="ri"><use href="#raster"/></svg><span class="off">HRSL_cairo_population</span></div>
      <div class="row"><i class="tw r"></i><i class="cb"></i><svg class="ri"><use href="#raster"/></svg><span class="off">Merged_SRTM_DEM</span><svg class="mem"><use href="#chipmem"/></svg></div>
      <div class="row"><i class="tw r"></i><i class="cb"></i><svg class="ri"><use href="#raster"/></svg><span class="off">Reprojected_Merged_SRTM_DEM</span></div>
      <div class="row"><i class="tw d"></i><i class="cb"><svg><use href="#check"/></svg></i><svg class="gi"><use href="#group"/></svg><span>clipped</span></div>
      <div class="row sub"><i class="tw"></i><i class="cb"></i><svg class="ri"><use href="#raster"/></svg><span class="off">clipped_Reprojected_LandCover_2016</span></div>
      <div class="row sub"><i class="tw"></i><i class="cb"></i><svg class="ri"><use href="#raster"/></svg><span class="off">clipped_Reprojected_LandCover_2015</span></div>
      <div class="row sub"><i class="tw"></i><i class="cb"></i><svg class="ri"><use href="#raster"/></svg><span class="off">clipped_Reprojected_LandCover_2017</span></div>
      <div class="row sub"><i class="tw"></i><i class="cb"></i><svg class="ri"><use href="#raster"/></svg><span class="off">clipped_Reprojected_LandCover_2018</span></div>
      <div class="row sub"><i class="tw"></i><i class="cb"></i><svg class="ri"><use href="#raster"/></svg><span class="off">clipped_Reprojected_LandCover_2019</span></div>
      <div class="row sub sel"><i class="tw d"></i><i class="cb"><svg><use href="#check"/></svg></i><svg class="ri"><use href="#raster"/></svg><span class="cur">clipped_Reprojected_Merged_SRTM</span><svg class="mem"><use href="#chipmem"/></svg></div>
      <div class="row leg"><i class="sw c0"></i><span>0.00</span></div>
      <div class="row leg"><i class="sw c1"></i><span>216.67</span></div>
      <div class="row leg"><i class="sw c2"></i><span>433.33</span></div>
      <div class="row leg"><i class="sw c3"></i><span>650.00</span></div>
      <div class="row leg"><i class="sw c4"></i><span>866.67</span></div>
      <div class="row leg"><i class="sw c5"></i><span>1083.33</span></div>
      <div class="row leg"><i class="sw c6"></i><span>1300.00</span></div>
      <div class="row"><i class="tw r"></i><i class="cb"></i><svg class="ri"><use href="#raster"/></svg><span class="off">Reprojected_HRSL_cairo_population</span><svg class="mem"><use href="#chipmem"/></svg></div>
      <div class="row"><i class="tw"></i><i class="cb"><svg><use href="#check"/></svg></i><i class="blank"></i><span class="bold">cairo_admin_boundary</span></div>
      <div class="row"><i class="tw r"></i><i class="cb"></i><svg class="gi"><use href="#group"/></svg><span>SRTM_DEM</span></div>
      <div class="row"><i class="tw r"></i><i class="cb"></i><svg class="gi"><use href="#group"/></svg><span>Land Cover</span></div>
    </div>
  </section>
  <div class="splitter"><i></i></div>

  <section class="canvas">
    <svg class="map" viewBox="0 0 1568 1410" preserveAspectRatio="none">
      <defs>
        <clipPath id="outline"><path shape-rendering="crispEdges" d="M458 70H472L478 84 620 76 720 70 835 64 900 80 995 98H1090L1180 94 1396 88 1412 170 1440 290 1477 465 1482 600 1487 720 1492 870 1496 960 1488 1100 1480 1220 1470 1343 1400 1335 1290 1318 1150 1295 1040 1278 860 1273H735L640 1290 520 1310 420 1306 335 1301 270 1280 247 1277 245 1295H235L234 1286H222L216 1250 207 1248 212 1200 218 1165 214 1130 207 1120 219 1108 214 1050 208 1000 200 960 190 930V850L184 810 172 775 160 763 125 742 105 715 82 685 70 640 66 590 74 540 78 490 66 430 70 390 98 322 130 312 186 302 196 254H214L240 220H265L280 160 262 145V136L290 142 300 158 342 154 355 183 378 165 380 118 395 122 430 125 437 88H458zM56 412 43 430 52 500 62 505 67 495 60 440zM68 518 58 530V590L64 596 72 540zM66 630l8-4 4 36-6-4zM82 695l18 22-6-1-12-12zM180 842h6v38h-6z"/></clipPath>
        <filter id="b90" x="-50%" y="-50%" width="200%" height="200%"><feGaussianBlur stdDeviation="75"/></filter>
        <filter id="b40" x="-50%" y="-50%" width="200%" height="200%"><feGaussianBlur stdDeviation="36"/></filter>
        <filter id="b10" x="-50%" y="-50%" width="200%" height="200%"><feGaussianBlur stdDeviation="11"/></filter>
        <filter id="b3" x="-20%" y="-20%" width="140%" height="140%"><feGaussianBlur stdDeviation="2.600"/></filter>
        <filter id="magma" x="0" y="0" width="1568" height="1410" filterUnits="userSpaceOnUse" color-interpolation-filters="sRGB">
          <feTurbulence type="fractalNoise" baseFrequency=".022" numOctaves="5" seed="4" result="w"/>
          <feDisplacementMap in="SourceGraphic" in2="w" scale="54" xChannelSelector="R" yChannelSelector="G" result="g"/>
          <feTurbulence type="fractalNoise" baseFrequency=".012 .009" numOctaves="6" seed="11" result="t"/>
          <feColorMatrix in="t" values="1 0 0 0 0 1 0 0 0 0 1 0 0 0 0 0 0 0 0 1" result="n"/>
          <feComposite in="g" in2="n" operator="arithmetic" k1=".24" k2=".88" k3="0" k4="0"/>
          <feComponentTransfer>
            <feFuncR type="table" tableValues="0 .082 .231 .392 .549 .718 .871"/>
            <feFuncG type="table" tableValues="0 .055 .059 .102 .161 .216 .286"/>
            <feFuncB type="table" tableValues=".016 .22 .44 .502 .506 .475 .408"/>
            <feFuncA type="discrete" tableValues="1 1"/>
          </feComponentTransfer>
        </filter>
      </defs>
      <g clip-path="url(#outline)"><g filter="url(#magma)">
        <rect x="-100" y="-100" width="1768" height="1610" fill="#484848"/>
        <g filter="url(#b90)">
          <path d="M-200-200H800L560 200 330 350 250 560 130 760-200 800z" fill="#000"/>
          <path d="M400-100h520l-150 340-340 180-160 200H100z" fill="#101010" opacity=".75"/>
          <path d="M740 420 1150 500 1200 700 1500 780 1600 1500H900L640 1100 300 800 460 620z" fill="#7a7a7a"/>
          <path d="M1150 880 1600 880 1500 1300 1250 1200z" fill="#5e5e5e" opacity=".5"/>
        </g>
        <g filter="url(#b40)">
          <path d="M0 300H300L230 470 110 540 190 640 330 700 190 760 0 760z" fill="#000" opacity=".9"/>
          <path d="M-100 740 200 770 290 950 330 1130 360 1300 380 1500H-100z" fill="#020202"/>
          <path d="M340 960 440 980 560 1100 700 1230 560 1360 400 1360 320 1180z" fill="#3a3a3a"/>
          <path d="M240 780 380 740 560 800 800 920 740 970 520 980 420 900 300 900z" fill="#626262"/>
          <path d="M540 930 850 900 1000 1060 1150 1170 1180 1280H900L700 1180 560 1060z" fill="#7c7c7c"/>
          <path d="M640 620 760 540 880 620 960 790 900 860 760 790z" fill="#8c8c8c" opacity=".7"/>
          <path d="M980 860 1180 820 1240 1060 1180 1140 1040 1060z" fill="#8c8c8c" opacity=".8"/>
          <path d="M600 1120 700 1140 880 1290 650 1300z" fill="#525252"/>
          <path d="M1190 1130 1300 1160 1500 1260V1380L1210 1250z" fill="#505050"/>
          <path d="M1080 690h440v30h-420z" fill="#505050"/>
        </g>
        <g filter="url(#b10)">
          <path d="M150 540 190 490 280 560 380 600 350 625 220 615 170 580z" fill="#3e3e3e"/>
          <path d="M230 800 300 775 350 780 400 860 380 900 300 890z" fill="#646464"/>
          <path d="M570 620 600 600 670 650 640 680z" fill="#878787"/>
          <path d="M820 600 850 690 830 680 800 640zM890 760 930 770 920 800zM900 640 945 700 920 670z" fill="#999"/>
          <path d="M760 950 900 945 955 970 990 1060 1110 1130 1160 1180 1180 1250 1150 1275 1000 1275 900 1180 850 1090 780 1010z" fill="#a2a2a2"/>
          <path d="M970 1070 1110 1130 1160 1180 1175 1240 1130 1215 1000 1180 920 1150z" fill="#c4c4c4"/>
          <path d="M850 960 920 952 965 990 950 1030 880 1020z" fill="#c0c0c0"/>
          <path d="M1180 1290 1290 1265 1400 1340 1190 1330z" fill="#969696"/>
          <path d="M1190 720 1220 720 1400 960 1470 1150 1440 1130 1300 900z" fill="#808080" opacity=".6"/>
          <path d="M1290 745 1310 740 1390 890 1380 910 1310 820z" fill="#9c9c9c" opacity=".7"/>
          <path d="M1415 920 1440 980 1430 990zM1445 1010 1475 1090 1460 1070z" fill="#b0b0b0"/>
          <path d="M1150 1000 1200 970 1240 1100 1200 1130z" fill="#888" opacity=".7"/>
          <path d="M1240 1040 1330 1080 1350 1130 1260 1130z" fill="#808080" opacity=".8"/>
          <path d="M1390 750 1485 700V800l-80-10z" fill="#787878"/>
        </g>
        <g filter="url(#b3)" fill="none" stroke="#141414" stroke-width="6" stroke-linejoin="round" stroke-linecap="round">
          <path opacity=".45" d="M290 735 320 750 345 745 385 735 420 765 460 780 520 800 600 860 700 890 780 915"/>
          <path opacity=".7" d="M200 780 230 800 280 850M300 920 335 915V880M310 910 330 940 400 945 450 980 500 1030 560 1060 640 1130 740 1190 830 1250" stroke-width="9"/>
          <path opacity=".38" d="M350 860 390 890 440 870M400 945V900L430 870M510 980 560 930 600 900 680 920 740 960 840 970M500 980 460 950M540 970 580 1050M360 870V840L340 820M380 880 410 850M530 950 520 930M570 920 640 930M590 910 640 880"/>
          <path opacity=".36" d="M640 1130 600 1060 590 1050 680 1045 760 1030 800 1000M600 1040 625 1010M480 1090 450 1060 420 1080M560 1060V1040L600 1020M700 1040 690 1010M730 1035 740 1050 790 1045M640 1048 660 1020"/>
          <path opacity=".7" d="M470 1190 530 1170 540 1150 590 1130 640 1140M470 1200 520 1240 560 1270M530 1170 600 1200M420 1200 480 1180M600 1130 560 1110M500 1210 560 1190M510 1230 560 1240M430 1170 480 1190M480 1200 440 1230M590 1160 560 1150"/>
          <path opacity=".36" d="M830 1220 870 1150 910 1130 920 1090 960 1050 970 1010M860 1100 880 1080 850 1050 880 1020M870 1150 850 1110M920 1100 900 1060M780 1170 760 1200M830 1180 840 1130M960 1050 940 1030M860 1050 900 1030M910 1130 880 1110" stroke-width="6"/>
          <path opacity=".3" d="M1030 1270 1035 1195 1010 1160M1035 1195 1080 1150M1035 1220 1070 1220 1100 1240 1110 1200 1150 1210M990 1250 960 1200 920 1180M1040 1200 980 1180M1085 1190 1070 1130M930 1260 940 1220 910 1200M660 1280 700 1230 700 1200M1060 1190 1120 1170M1000 1190 990 1150M960 1240 930 1230M1100 1170 1090 1130M1130 1200 1120 1170M1010 1240 980 1230M1060 1260 1080 1230M1140 1240 1110 1240M960 1180 950 1130" stroke-width="5"/>
          <path opacity=".16" d="M1190 740 1270 860 1330 930 1400 1080 1470 1200M1230 730 1290 830M1340 720 1400 850 1440 1000M1360 1180 1400 1280 1470 1310M1200 1140 1210 1200" stroke-width="10"/>
          <path opacity=".24" d="M320 830 350 870M700 1110 740 1160M760 1100 780 1160M820 1090 810 1150M720 1100 770 1170M680 1090 700 1130M780 1080 800 1130M740 1180 780 1230M640 950 680 970M600 960 650 980M700 980 740 1000M650 1150 690 1200M420 880 450 900M460 870 480 890M480 1040 520 1070" stroke-width="4"/>
        </g>
      </g></g>
    </svg>
  </section>
  <div class="splitter"><i></i></div>

  <section class="styling">
    <div class="dock-title"><span>Layer Styling</span><svg class="db"><use href="#float"/></svg><svg class="db"><use href="#close"/></svg></div>
    <div class="combo target"><svg class="ri"><use href="#raster"/></svg><span>clipped_Reprojected_Merged_SRTM</span><i class="ar"></i></div>
    <div class="body">
      <div class="side">
        <b class="cur"><svg viewBox="0 0 22 22"><path d="M0 7 9 2l7 9-5 8z" fill="#b5d86a"/><path d="M1 9l4 10 6 3 3-5z" fill="#d03c6b"/><path d="M0 7l4 10 6-6-3-5z" fill="#6b8fc6"/><path d="M8 10 14 5l3 1 4-6h1l-3 7-1 5-6 6z" fill="#9aa08c" stroke="#80836a" stroke-width=".8"/></svg></b>
        <b><svg viewBox="0 0 22 22"><path d="M0 0h3v1h19v21H0z" fill="#e6e6e6"/><rect x="4" y="2" width="17" height="13" fill="#a9bfda"/><path d="M6 4h5v3l-2 4zM12 4h7l-2 4-2 3z" fill="#7389a3"/><path d="M0 17.500h22" stroke="#666" stroke-width="2.500"/><path d="M4 17.500h18" stroke="#bbb" stroke-dasharray="1 1"/></svg></b>
        <b><svg viewBox="0 0 22 22"><path d="M0 3h3v1h19v14H3v1H0z" fill="#efefef"/><path d="M4 9l3 2 2-3 4 6 3-3 2 2 3-4" fill="none" stroke="#5d87b4" stroke-width="1.200"/><path d="M3 4v12h19" fill="none" stroke="#999"/></svg></b>
        <b><svg viewBox="0 0 22 24"><path d="M5 9v10M17 9v10M5 9h12M11 5v14" stroke="#d88c28" stroke-width="2.600" fill="none"/><rect x="6.500" width="9" height="8" fill="#e3413f"/><rect y="16" width="9" height="7.500" fill="#fbd83c"/><rect x="13" y="16" width="9" height="7.500" fill="#7cb1ee"/></svg></b>
        <b><svg viewBox="0 0 22 22"><path d="M2 5c1-4 5-4 7-3V0l5 5-4 5V7C7 6 6 8 7 11l-3 1C2 10 1 8 2 5z" fill="#5fa06a"/><path d="M20 18c-1 4-4 5-7 4v-4c4 1 4-2 2-3v2l-6-4 5-5v3c4 0 7 3 6 7z" fill="#e2773a"/></svg></b>
      </div>
      <div class="main">
        <div class="scrollrow">
          <div class="form">
            <div class="combo renderer"><svg class="spec" viewBox="0 0 18 18"><rect x="1" y="1" width="16" height="16" fill="url(#spectral)" stroke="#555" stroke-width="1.800"/></svg><span>Singleband pseudocolor</span><i class="ar"></i></div>
            <div class="fr band"><label>Band</label><div class="combo"><span>Band 1 (Gray)</span><i class="ar"></i></div></div>
            <div class="fr minmax"><label>Min</label><div class="input">0</div><label>Max</label><div class="input">1300</div></div>
            <div class="fr section"><i class="tri"></i><strong>Min / Max Value Settings</strong></div>
            <div class="fr f2 interp"><label>Interpolation</label><div class="combo"><span>Linear</span><i class="ar"></i></div></div>
            <div class="fr f2 ramp"><label>Color ramp</label><div class="rampbtn"><i></i></div><div class="rampdd"><i class="ar"></i></div></div>
            <div class="fr f2 suffix"><label>Label unit suffix</label><div class="input"></div></div>
            <div class="fr f2 prec"><label>Label precision</label><div class="spin"><span>2</span><svg class="clr"><use href="#clear"/></svg><em></em></div></div>
            <div class="table">
              <div class="tmain">
                <div class="thead"><span>Value</span><span>Color</span><span>Label</span></div>
                <div class="tr"><span>0</span><i class="c0"></i><span>0.00</span></div>
                <div class="tr"><span>216.6666667</span><i class="c1"></i><span>216.67</span></div>
                <div class="tr"><span>433.3333333</span><i class="c2"></i><span>433.33</span></div>
                <div class="tr"><span></span><i class="c3"></i><span></span></div>
              </div>
              <div class="sb sb1"><i class="up"></i><u></u><s></s><i class="dn"></i></div>
            </div>
            <div class="fr mode"><label>Mode</label><div class="combo"><span>Equal Interval</span><i class="ar"></i></div><label class="cl">Classes</label><div class="spin"><span>7</span><svg class="clr"><use href="#clear"/></svg><em></em></div></div>
            <div class="fr btns">
              <div class="btn classify">Classify</div>
              <div class="btn sq"><svg viewBox="0 0 22 22"><path d="M8 1.500h6V8h6.500v6H14v6.500H8V14H1.500V8H8z" fill="#fff" stroke="#4b8f55" stroke-width="1.500"/><path d="M11 4v14M4 11h14" stroke="#4b8f55" stroke-width="2.400"/></svg></div>
              <div class="btn sq"><svg viewBox="0 0 22 22"><rect x=".8" y="7" width="20.400" height="8" fill="#fff" stroke="#e04848" stroke-width="1.500"/><path d="M3.500 11h15" stroke="#f06060" stroke-width="3.400"/></svg></div>
              <div class="btn sq refresh"><svg viewBox="0 0 24 24"><path d="M13 0v4l1-.2c5 0 9 3 9 7.200 0 2-2 4-5 4 2-2 1-5-2-5h-3v4L8 7z" fill="#86bd8e"/><path d="M11 24v-4c-6 0-11-2-11-7 0-2 2-4 5-4-2 3-1 5 2 5h4v-4l5 7z" fill="#86bd8e"/></svg></div>
              <div class="btn sq"><svg><use href="#folder"/></svg></div>
              <div class="btn sq"><svg viewBox="0 0 24 24"><use href="#floppy"/><rect x="14" y="14" width="10" height="10" rx="1.500" fill="#4a9152"/><path d="M16.500 21.500l5-5" stroke="#fff" stroke-width="2"/></svg></div>
            </div>
            <i class="cb cut"></i>
          </div>
          <div class="sb sb2"><i class="up"></i><u></u><s></s><i class="dn"></i></div>
        </div>
        <div class="foot">
          <div class="btn hist back"><svg viewBox="0 0 24 24"><use href="#undo"/></svg></div>
          <div class="btn hist fwd"><svg class="flip" viewBox="0 0 24 24"><use href="#undo"/></svg></div>
          <i class="cb live"><svg><use href="#check"/></svg></i><span>Live update</span>
          <div class="btn apply">Apply</div>
        </div>
      </div>
    </div>
    <div class="tabs"><div class="tab t1">Processing Toolbox</div><div class="tab t2 act">Layer Styling</div><div class="tab t3">Results Viewer</div><div class="rest"></div></div>
  </section>
</main>

<footer class="status">
  <div class="input locator"><svg viewBox="0 0 14 14"><circle cx="5.500" cy="5.500" r="4.300" fill="none" stroke="#888" stroke-width="1.400"/><path d="M8.800 8.800 12.500 12.500" stroke="#888" stroke-width="2"/></svg><span>Type to locate (Ctrl+K)</span></div>
  <label class="l1">Coordinate</label><div class="input coord">628377,753456</div>
  <svg class="bug" viewBox="0 0 24 24"><path d="M10 22c3 3 12 2 13-4l-2-5z" fill="#c9bcbc"/><ellipse cx="8" cy="7.500" rx="6" ry="7.500" transform="rotate(-25 8 7.500)" fill="#000"/><path d="M5 3l3 8M9 2l2 8" stroke="#fff" stroke-width="1.700"/><path d="M1 15l5 2-1 4 5 1M15 8l3-3M16 11l5-4" stroke="#000" stroke-width="1.700" stroke-dasharray="2.500 1.300" fill="none"/><circle cx="13.500" cy="17.500" r="5.600" fill="#fff" stroke="#000" stroke-width="2"/><circle cx="13.500" cy="17.500" r="1.800" fill="#000"/><path d="M6 14c3-3 8-4 12-1" stroke="#000" stroke-width="2.500" fill="none"/></svg>
  <label class="l2">Scale</label><div class="input scale"><span>1:680315</span><div><i class="ar"></i></div></div>
  <svg class="lock" viewBox="0 0 18 23"><path d="M4 11V7a5 5 0 0 1 10 0v4" fill="none" stroke="#8c8c8c" stroke-width="3.400"/><path d="M4 11V7a5 5 0 0 1 10 0v4" fill="none" stroke="#ddd" stroke-width="1"/><rect y="10" width="18" height="13" rx="1" fill="#626262"/></svg>
  <label class="l3">Magnifier</label><div class="spin mag"><span>100%</span><em></em></div>
  <label class="l4">Rotation</label><div class="spin rotn"><span>0.0 °</span><em></em></div>
  <i class="cb rend"><svg><use href="#check"/></svg></i><label class="l5">Render</label>
  <svg class="globe" viewBox="0 0 23 21"><path d="M6 1h11l4 4 2 5h-2c0 6-4 10-9.500 10S2 16 2 10H0l2-5z" fill="#696969"/><path d="M2 6h19M2 10.500h19M4 15h15M11.500 1v19M7 1c-3 6-2 14 2 19M16 1c3 6 2 14-2 19" stroke="#eee" stroke-width=".9" fill="none"/></svg>
  <label class="l6">EPSG:22992</label>
  <svg class="bubble" viewBox="0 0 24 24"><path d="M12 1c7 0 12 4 12 9.500 0 3-1.500 5.500-4 7 0 2.500 1 4 2.500 5.500-3 0-6-1.500-7.500-3.500-9 1-15-3-15-9C0 5 5 1 12 1z" fill="#5b5b5b"/><g fill="#fff"><circle cx="6.500" cy="10.500" r="1.700"/><circle cx="12" cy="10.500" r="1.700"/><circle cx="17.500" cy="10.500" r="1.700"/></g></svg>
</footer>
</div>
</body>
</html>
```
FILE: styles.css
```css
* { box-sizing: border-box; }
body { margin: 0; background: #efefef; font-family: "Open Sans", "Noto Sans", sans-serif; font-size: 17px; color: #000; }
i, em { font-style: normal; display: block; }
.defs { position: absolute; }
.ic { font-family: "DejaVu Sans", sans-serif; font-weight: bold; }
.ic.thin { font-weight: normal; }
.abc { font-size: 8.500px; letter-spacing: -.3px; fill: #8d8d86; }
.abc.red { fill: #f00; }
.app { width: 1920px; height: 1035px; display: flex; flex-direction: column; overflow: hidden; background: #efefef; }

.titlebar { height: 34px; background: #fff; display: flex; align-items: center; }
.logo { width: 24px; height: 24px; margin-left: 2px; }
.caption { margin-left: 6px; white-space: nowrap; letter-spacing: .32px; }
.winbtns { width: 160px; height: 34px; margin-left: auto; margin-right: 29px; overflow: visible; }

.menubar { height: 30px; padding-left: 13px; display: grid; grid-template-columns: 71px 47px 54px 58px 81px 74px 67px 66px 90px 54px 60px 102px 50px; align-items: center; border-bottom: 1px solid #d6d6d6; line-height: 28px; padding-top: 1px; }
.menubar u { text-underline-offset: 3px; text-decoration-thickness: 1px; }

.toolbar { height: 43px; display: flex; align-items: center; background: linear-gradient(#fafafa, #eeeeee); border-bottom: 1px solid #b2b2b2; }
.toolbar.last { height: 42px; }
.toolbar > b { width: 33px; height: 32px; display: flex; align-items: center; justify-content: center; flex: none; }
.toolbar > b.on { background: #dcdcdc; border: 1px solid #b4b4b4; border-radius: 3px; width: 32px; margin: 0 0 0 1px; }
.toolbar svg { width: 24px; height: 24px; overflow: visible; }
.dis svg { opacity: .33; filter: saturate(.4); }
.dis.more svg { opacity: .5; }
.brown { color: #a4604a; }
.moss { color: #5b7f6c; }
.flip { transform: scaleX(-1); }
.grip { width: 24px; height: 18px; padding-right: 5px; display: flex; justify-content: flex-end; flex: none; }
.grip.first { width: 18px; }
.grip.slim { width: 23px; }
.grip::after { content: ""; width: 5px; height: 17px; background-image: radial-gradient(circle at 1px 1px, #b0b0b0 .8px, transparent 1px); background-size: 4px 3px; }
.sep { width: 9px; height: 20px; flex: none; display: flex; justify-content: center; }
.sep.wide { width: 11px; }
.sep.mid { width: 10px; }
.sep::after { content: ""; width: 1px; background: #cfcfcf; }
.dd { width: 18px; flex: none; }
.dd::after { content: ""; display: block; margin: 0 auto; width: 0; border: 5.500px solid transparent; border-top: 6px solid #4e4e4e; border-bottom: 0; }
.dd.off::after { border-top-color: #a6a6a6; }

.work { height: 806px; display: flex; }
.dock-title { height: 25px; display: flex; align-items: center; padding: 0 0 0 4px; }
.dock-title span { flex: 1; font-size: 16.500px; }
.db { width: 12px; height: 12px; margin: -2px 0 0 3px; }
.layers { width: 580px; display: flex; flex-direction: column; }
.layers .dock-title { padding-right: 1px; }
.layer-tools { height: 32px; display: flex; align-items: center; padding: 0 0 5px 6px; }
.layer-tools b { width: 25px; height: 24px; display: flex; align-items: center; justify-content: center; }
.layer-tools b.on { border: 1px solid #b4b4b4; background: #dcdcdc; border-radius: 3px; }
.layer-tools svg { width: 17px; height: 17px; overflow: visible; }
.layer-tools .dd { width: 17px; }
.tree { flex: 1; background: #fff; border: 1px solid #b4b4b4; }
.row { height: 27px; display: flex; align-items: center; padding-left: 8px; }
.row span { white-space: nowrap; }
.row.sub { padding-left: 38px; }
.row.leg { padding-left: 93px; }
.row > span { margin-left: 7px; line-height: 27px; padding-top: 1px; }
.row.leg > span { margin-left: 6px; }
.row > .bold { margin-left: 8px; }
.tw { width: 25px; height: 14px; display: flex; align-items: center; flex: none; }
.tw.r::after { content: ""; margin-left: 4px; border: 6px solid transparent; border-left: 6px solid #585858; border-right: 0; }
.tw.d::after { content: ""; margin-left: 1px; border: 6px solid transparent; border-top: 6px solid #585858; border-bottom: 0; }
.cb { width: 21px; height: 21px; border: 1px solid #b6b6b6; background: linear-gradient(#f3f3f3, #fff 4px); flex: none; }
.cb svg { display: block; width: 21px; height: 21px; margin: -1px; }
.ri { width: 20px; height: 20px; flex: none; }
.row .ri { margin-left: 9px; }
.gi { width: 20px; height: 22px; margin: -3px 2px 0 7px; flex: none; }
.blank { width: 20px; height: 21px; margin-left: 6px; border: 1px solid #f6f6f6; flex: none; }
.off { color: #7f7f7f; font-weight: bold; font-style: italic; letter-spacing: .56px; }
.sub .off { letter-spacing: .4px; }
.bold { font-weight: bold; }
.mem { width: 24px; height: 24px; background: #f4f4f4; border: 1px solid #ddd; border-radius: 3px; margin: 0 9px 0 auto; }
.sel { background: linear-gradient(#1785dd, #0078d7); }
.sel .ri { opacity: .7; }
.sel .tw::after { border-top-color: #12345c; }
.cur { color: #f4f9ff; font-weight: bold; text-decoration: underline; text-underline-offset: 2px; text-decoration-thickness: 1.500px; letter-spacing: .2px; }
.sw { width: 20px; height: 20px; margin-top: -1px; }
.c0 { background: #000004; } .c1 { background: #2c115f; } .c2 { background: #721f81; } .c3 { background: #b73779; } .c4 { background: #f1605d; } .c5 { background: #feae76; } .c6 { background: #fcfdbf; }

.splitter { width: 9px; display: flex; align-items: center; justify-content: center; }
.splitter i { width: 1px; height: 17px; background: repeating-linear-gradient(#aaa 0 1px, transparent 1px 3px); }
.canvas { width: 716px; margin-top: 1px; background: #fff; border: 1px solid #b4b4b4; padding: 126px 0 0 70px; }
.map { width: 600px; height: 470px; display: block; }

.styling { width: 606px; display: flex; flex-direction: column; font-family: "Noto Sans", sans-serif; font-size: 15.500px; letter-spacing: -.25px; }
.styling .dock-title span { letter-spacing: 0; font-size: 15.700px; padding-top: 1px; }
.styling .dock-title { padding-right: 2px; }
.styling > * { flex: none; }
.combo { height: 27px; border: 1px solid #a9a9a9; border-radius: 3px; background: linear-gradient(#fefefe, #ececec); display: flex; align-items: center; padding: 0 9px 0 4px; }
.combo span { white-space: nowrap; flex: 1; padding-top: 1px; }
.ar { width: 0; border: 6px solid transparent; border-top: 7px solid #555; border-bottom: 0; flex: none; }
.target { height: 31px; margin: 0 3px 0 3px; padding: 0 10px 0 8px; }
.target span { margin-left: 4px; letter-spacing: -.18px; }
.input { height: 27px; border: 1px solid #a9a9a9; border-radius: 3px; background: #fff; display: flex; align-items: center; padding-left: 3px; white-space: nowrap; }
.body { height: 700px; margin: 10px 0 0 3px; display: flex; }
.side { width: 38px; background: linear-gradient(#efefef 0 32px, #5d5d5d 32px); display: flex; flex-direction: column; align-items: center; padding-right: 8px; }
.side b { height: 31.500px; display: flex; align-items: center; }
.side svg { width: 22px; height: 22px; }
.side b.cur { padding-left: 6px; height: 33px; }
.main { flex: 1; display: flex; flex-direction: column; }
.scrollrow { height: 660px; display: flex; overflow: hidden; }
.form { width: 541px; padding: 13px 0 0 16px; overflow: hidden; }
.renderer { width: 512px; height: 32px; padding-left: 8px; }
.spec { width: 18px; height: 18px; margin-right: 6px; }
.fr { display: flex; align-items: center; height: 27px; white-space: nowrap; }
.band { margin-top: 12px; }
.minmax label { width: 107px; padding-left: 3px; }
.band label, .minmax label:first-child { width: 110px; padding-left: 3px; }
.minmax label:nth-of-type(2) { width: 115px; padding-left: 9px; }
.band .combo { width: 399px; }
.minmax { margin-top: 9px; }
.minmax .input { width: 142px; }
.section { margin-top: 6px; }
.section strong { margin-left: 10px; font-size: 16px; letter-spacing: .33px; }
.tri { margin-left: 9px; border: 5px solid transparent; border-left: 6px solid #333; border-right: 0; }
.f2 label { width: 179px; padding-left: 6px; }
.f2 .combo, .f2 .input, .f2 .spin { width: 327px; }
.interp { margin-top: 13px; }
.ramp { margin-top: 9px; height: 28px; }
.rampbtn { width: 308px; height: 28px; border: 1px solid #a9a9a9; border-radius: 3px; background: #fafafa; padding: 2px 4px; }
.rampbtn i { height: 22px; background: linear-gradient(90deg, #000004, #110c2f 8%, #2c115f 17%, #4a0c6b 24%, #721f81 34%, #932b80 43%, #b73779 52%, #de4968 63%, #f9765c 72%, #fd9f6c 80%, #fec488 88%, #fcfdbf); }
.rampdd { width: 18px; height: 28px; margin-left: 1px; border: 1px solid #a9a9a9; border-radius: 3px; background: linear-gradient(#fefefe, #ececec); display: flex; align-items: center; justify-content: center; }
.rampdd .ar { border-width: 6px 5px 0; }
.suffix { margin-top: 9px; }
.prec { margin-top: 10px; height: 28px; }
.spin { height: 28px; border: 1px solid #a9a9a9; border-radius: 3px; background: #fff; display: flex; align-items: center; padding-left: 4px; }
.spin span { flex: 1; }
.clr { width: 13px; height: 11px; margin-right: 11px; }
.spin em { width: 21px; height: 100%; border-left: 1px solid #b4b4b4; background: linear-gradient(#fefefe, #f0f0f0); display: flex; flex-direction: column; align-items: center; justify-content: space-between; padding: 5px 0; }
.spin em::before { content: ""; border: 5.500px solid transparent; border-bottom: 6px solid #555; border-top: 0; }
.spin em::after { content: ""; border: 5.500px solid transparent; border-top: 6px solid #555; border-bottom: 0; }
.table { margin: 10px 0 0 6px; width: 500px; height: 250px; border: 1px solid #b4b4b4; background: #fff; display: flex; overflow: hidden; font-family: "Open Sans", sans-serif; font-size: 17px; letter-spacing: 0; }
.tmain { width: 477px; overflow: hidden; }
.thead { height: 31px; display: grid; grid-template-columns: 149px 89px 1fr; background: linear-gradient(#fdfdfd, #ebebeb); border-bottom: 1px solid #a8a8a8; align-items: stretch; line-height: 33px; font-size: 16.500px; }
.thead span { padding-left: 3px; border-left: 1px solid #c4c4c4; }
.thead span:first-child { border: 0; }
.tr { height: 70px; display: grid; grid-template-columns: 161px 66px 1fr; align-items: center; }
.tr span { padding-top: 1px; }
.tr span:first-child { padding-left: 33px; letter-spacing: .1px; }
.tr span:last-child { padding-left: 15px; color: #a3a3a3; }
.tr i { height: 66px; border-radius: 11px; margin-top: -2px; }
.sb { display: flex; flex-direction: column; border-left: 1px solid #b8b8b8; }
.sb .up, .sb .dn { height: 21px; display: flex; justify-content: center; align-items: center; background: #fbfbfb; flex: none; }
.sb .up { border-bottom: 1px solid #b8b8b8; }
.sb .dn { border-top: 1px solid #b8b8b8; }
.sb .up::after { content: ""; border: 5.500px solid transparent; border-bottom: 6px solid #555; border-top: 0; }
.sb .dn::after { content: ""; border: 5.500px solid transparent; border-top: 6px solid #555; border-bottom: 0; }
.sb u { background: linear-gradient(90deg, #fff, #f3f3f3); border-bottom: 1px solid #b8b8b8; flex: none; }
.sb s { flex: 1; background: #e4e4e4; }
.sb1 { width: 21px; }
.sb1 u { height: 89px; }
.sb2 { width: 21px; }
.sb2 u { height: 315px; }
.mode { margin-top: 10px; height: 28px; }
.mode label { padding-left: 6px; width: 53px; }
.mode .combo { width: 133px; padding-right: 9px; }
.mode .cl { width: 238px; text-align: right; padding-right: 8px; }
.mode .spin { width: 82px; }
.btns { margin-top: 10px; height: 33px; padding-left: 6px; gap: 9px; }
.btn { border: 1px solid #a9a9a9; border-radius: 3px; background: linear-gradient(#fefefe, #efefef); display: flex; align-items: center; justify-content: center; flex: none; }
.classify { width: 80px; height: 30px; }
.sq { width: 39px; height: 33px; }
.sq svg { width: 23px; height: 23px; }
.refresh svg { width: 25px; height: 24px; }
.cut { margin: 11px 0 0 6px; }
.foot { height: 40px; display: flex; align-items: center; padding: 9px 0 0 3px; }
.hist { width: 32px; height: 31px; margin-right: 6px; }
.hist svg { width: 20px; height: 20px; }
.back { color: #e07b3a; }
.fwd { color: #6fae78; }
.live { margin-left: 281px; }
.foot span { margin-left: 7px; width: 94px; white-space: nowrap; }
.apply { width: 80px; height: 31px; }
.tabs { height: 38px; padding-top: 4px; display: flex; align-items: flex-start; }
.tab { height: 33px; border: 1px solid #b4b4b4; background: #dcdcdc; display: flex; align-items: center; padding-left: 17px; border-radius: 0 0 3px 3px; white-space: nowrap; letter-spacing: -.15px; }
.tab.act { background: #fbfbfb; border-top-color: #fbfbfb; height: 35px; margin-top: -1px; padding-top: 2px; }
.t1 { width: 175px; border-right: 0; } .t2 { width: 127px; padding-left: 16px; } .t3 { width: 137px; border-left: 0; padding-left: 17px; }
.rest { flex: 1; border-top: 1px solid #b4b4b4; }

.status { height: 37px; display: flex; align-items: center; padding: 1px 0 0 4px; border-bottom: 1px solid #d3d2e2; font-family: "Noto Sans", sans-serif; font-size: 15.500px; letter-spacing: -.25px; white-space: nowrap; }
.status > * { flex: none; }
.status label { text-align: left; }
.locator { width: 291px; padding-left: 8px; }
.locator svg { width: 14px; height: 14px; }
.locator span { margin-left: 8px; font-style: italic; color: #b9b9b9; letter-spacing: .45px; }
.l1 { width: 80px; margin-left: 558px; }
.coord { width: 127px; padding-left: 6px; letter-spacing: .2px; }
.bug { width: 24px; height: 24px; margin-left: 4px; }
.l2 { width: 39px; margin-left: 14px; }
.scale { width: 113px; padding: 0 0 0 4px; letter-spacing: 0; }
.scale span { flex: 1; }
.scale div { width: 30px; height: 25px; background: linear-gradient(#fcfcfc, #efefef); display: flex; align-items: center; justify-content: center; }
.lock { width: 18px; height: 23px; margin-left: 14px; }
.l3 { width: 68px; margin-left: 10px; letter-spacing: -.5px; }
.mag { width: 105px; }
.l4 { width: 60px; margin-left: 9px; letter-spacing: -.35px; }
.rotn { width: 101px; margin-left: 8px; }
.rend { margin-left: 6px; }
.l5 { width: 52px; margin-left: 8px; letter-spacing: -.35px; }
.globe { width: 23px; height: 21px; margin-left: 16px; }
.l6 { width: 92px; margin-left: 4px; letter-spacing: .3px; }
.bubble { width: 24px; height: 24px; margin-left: 19px; }
```
